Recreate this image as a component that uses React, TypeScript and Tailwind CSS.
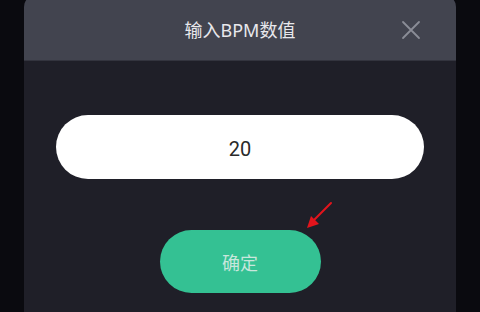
import React, { useState } from 'react';

const CloseIcon: React.FC = () => (
    <svg width="20" height="20" viewBox="0 0 20 20" fill="none" stroke="#8b8d97" strokeWidth="1.8" strokeLinecap="round">
        <path d="M2 2 L18 18 M18 2 L2 18" />
    </svg>
);

// red annotation arrow pointing at the confirm button
const Arrow: React.FC = () => (
    <svg width="30" height="30" viewBox="0 0 30 30" className="absolute left-[304px] top-[201px]">
        <path d="M27 2 L9 20" stroke="#e2141c" strokeWidth="2" strokeLinecap="round" />
        <path d="M3 27 L7 15 L15 23 Z" fill="#e2141c" />
    </svg>
);

export default function App() {
    const [bpm, setBpm] = useState('20');

    return (
        <div className="relative w-[480px] h-[312px] overflow-hidden bg-[#0a0a0f] px-6" style={{ fontFamily: '"Noto Sans", "Noto Sans CJK SC", sans-serif' }}>
            <div className="mt-[-5px] h-[330px] rounded-t-[12px] overflow-hidden bg-[#1f1f28] flex flex-col">
                <div className="h-[66px] pt-[5px] bg-[#42444f] border-b border-[#33343e] flex items-center relative">
                    <div className="flex-1 text-center text-[18px] text-[#e8e8ec]">输入BPM数值</div>
                    <button className="absolute right-[35px] top-[25px]"><CloseIcon /></button>
                </div>
                <div className="flex flex-col items-center pt-[54px]">
                    <input
                        value={bpm}
                        onChange={e => setBpm(e.target.value)}
                        className="w-[368px] h-[64px] pt-[4px] rounded-full bg-white text-center text-[20px] text-[#2a2a2a] outline-none"
                        style={{ fontFamily: 'Roboto, sans-serif' }}
                    />
                    <button className="mt-[51px] w-[161px] h-[63px] pt-[3px] rounded-full bg-[#34c193] text-[18px] text-[#c8e6dc]">确定</button>
                </div>
            </div>
            <Arrow />
        </div>
    );
}
